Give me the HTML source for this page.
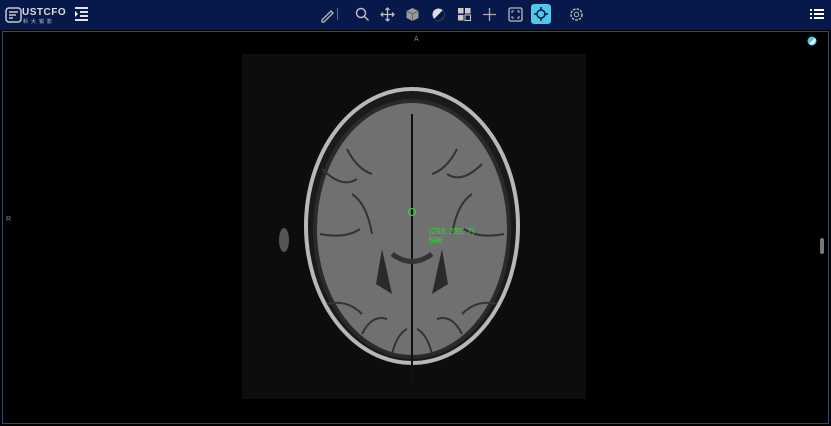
<!DOCTYPE html>
<html><head><style>
body{margin:0;width:831px;height:426px;background:#000;overflow:hidden;font-family:"Liberation Sans",sans-serif;position:relative}
.hdr{position:absolute;left:0;top:0;width:831px;height:30px;background:#07184a}
.vp{position:absolute;left:2px;top:31px;width:825px;height:391px;border:1px solid #2b4d6a;background:#000}
.ic{position:absolute;top:7px}
</style></head><body>
<div class="hdr">
<svg class="ic" style="left:5px;top:7px" width="18" height="16"><rect x="1" y="1" width="15" height="14" rx="3" fill="none" stroke="#ccc" stroke-width="1.5"/><path d="M4 5h9M4 8h7M4 11h4" stroke="#ccc" stroke-width="1.5"/></svg>
<div style="position:absolute;left:22px;top:7px;color:#ddd;font-size:10px;font-weight:bold;letter-spacing:0.5px">USTCFO</div>
<div style="position:absolute;left:23px;top:18px;color:#ccc;font-size:5px;letter-spacing:3px;font-family:'Noto Sans CJK SC',sans-serif">科大锐影</div>
<svg class="ic" style="left:74px" width="15" height="14"><path d="M1 1h13M6 5h8M6 9h8M1 13h13" stroke="#fff" stroke-width="1.8"/><path d="M1 4l3 3-3 3z" fill="#fff"/></svg>
<svg class="ic" style="left:319px" width="16" height="16"><path d="M3 13l9-9 2 2-9 9-2 0z" fill="none" stroke="#bbb" stroke-width="1.3"/></svg>
<div style="position:absolute;left:337px;top:8px;width:1px;height:12px;background:#5a6a90"></div>
<svg class="ic" style="left:355px" width="15" height="15"><circle cx="6" cy="6" r="4.5" fill="none" stroke="#bbb" stroke-width="1.5"/><path d="M9.5 9.5l4 4" stroke="#bbb" stroke-width="1.5"/></svg>
<svg class="ic" style="left:380px" width="15" height="15"><path d="M7.5 1v13M1 7.5h13M5.5 3l2-2 2 2M5.5 12l2 2 2-2M3 5.5l-2 2 2 2M12 5.5l2 2-2 2" fill="none" stroke="#bbb" stroke-width="1.3"/></svg>
<svg class="ic" style="left:405px" width="15" height="15"><path d="M7.5 1l6 3v7l-6 3-6-3V4z" fill="#999"/><path d="M1.5 4l6 3 6-3M7.5 7v7" stroke="#666" fill="none"/></svg>
<svg class="ic" style="left:431px" width="15" height="15"><circle cx="7.5" cy="7.5" r="6" fill="#ddd"/><path d="M11.74 3.26A6 6 0 0 1 3.26 11.74z" fill="#07184a"/></svg>
<svg class="ic" style="left:457px" width="15" height="15"><rect x="1" y="1" width="5.5" height="5.5" fill="#ccc"/><rect x="8" y="1" width="5.5" height="5.5" fill="#ccc"/><rect x="1" y="8" width="5.5" height="5.5" fill="#ccc"/><rect x="8" y="8" width="5.5" height="5.5" fill="none" stroke="#ccc"/></svg>
<svg class="ic" style="left:482px" width="15" height="15"><path d="M7.5 1v13M1 7.5h13" stroke="#aaa" stroke-width="1.3"/></svg>
<svg class="ic" style="left:508px" width="15" height="15"><rect x="1" y="1" width="13" height="13" rx="1.5" fill="none" stroke="#bbb" stroke-width="1.3"/><path d="M4 6V4h2M9 4h2v2M11 9v2H9M6 11H4V9" fill="none" stroke="#bbb"/></svg>
<div style="position:absolute;left:531px;top:4px;width:20px;height:20px;border-radius:3px;background:#4fc8ea"></div>
<svg class="ic" style="left:534px;top:7px" width="14" height="14"><circle cx="7" cy="7" r="4" fill="none" stroke="#07184a" stroke-width="1.5"/><path d="M7 0v3M7 11v3M0 7h3M11 7h3" stroke="#07184a" stroke-width="1.5"/></svg>
<svg class="ic" style="left:569px" width="15" height="15"><circle cx="7.5" cy="7.5" r="5.5" fill="none" stroke="#bbb" stroke-width="1.5" stroke-dasharray="2.5 1.2"/><circle cx="7.5" cy="7.5" r="2.2" fill="none" stroke="#bbb"/></svg>
<svg class="ic" style="left:809px;top:9px" width="16" height="12"><path d="M1 1h2M5 1h10M1 5h2M5 5h10M1 9h2M5 9h10" stroke="#fff" stroke-width="2"/></svg>
</div>
<div class="vp"></div>
<div style="position:absolute;left:414px;top:36px;color:#888;font-size:7px">A</div>
<div style="position:absolute;left:6px;top:216px;color:#888;font-size:7px">R</div>
<svg style="position:absolute;left:807px;top:36px" width="10" height="10"><circle cx="5" cy="5" r="4.5" fill="#4fc8ea"/><path d="M8 2A4.5 4.5 0 0 1 2 8z" fill="#fff"/></svg>
<div style="position:absolute;left:820px;top:238px;width:4px;height:16px;background:#777;border-radius:2px"></div>
<svg style="position:absolute;left:242px;top:54px" width="344" height="345">
<rect width="344" height="345" fill="#0d0d0d"/>
<ellipse cx="170" cy="172" rx="108" ry="139" fill="#1a1a1a"/>
<ellipse cx="170" cy="172" rx="106" ry="137" fill="none" stroke="#b8b8b8" stroke-width="4"/>
<ellipse cx="170" cy="175" rx="97" ry="128" fill="#707070"/>
<ellipse cx="170" cy="175" rx="97" ry="128" fill="none" stroke="#2a2a2a" stroke-width="4"/>
<g stroke="#333" stroke-width="2" fill="none">
<path d="M80 115q20 20 35 10M105 95q10 20 25 25M240 110q-20 20-35 10M215 95q-10 20-25 25"/>
<path d="M78 180q25 5 40-5M262 180q-25 5-40-5M85 250q20-5 35 10M255 250q-20-5-35 10"/>
<path d="M120 280q10-20 25-15M220 280q-10-20-25-15M150 300q5-20 15-25M190 300q-5-20-15-25"/>
<path d="M110 140q15 10 20 40M230 140q-15 10-20 40"/>
</g>
<path d="M170 60v270" stroke="#111" stroke-width="2"/>
<path d="M140 195l10 45-16-10zM200 195l-10 45 16-10z" fill="#2a2a2a"/>
<path d="M150 200q20 15 40 0" stroke="#333" stroke-width="5" fill="none"/>
<ellipse cx="42" cy="186" rx="5" ry="12" fill="#555"/>
<circle cx="170" cy="158" r="3.5" fill="none" stroke="#2be02b"/>
<text x="187" y="180" fill="#2be02b" font-size="8" font-family="Liberation Sans">(253, 235, 7)</text>
<text x="187" y="189" fill="#2be02b" font-size="8" font-family="Liberation Sans">596</text>
</svg>
</body></html>
